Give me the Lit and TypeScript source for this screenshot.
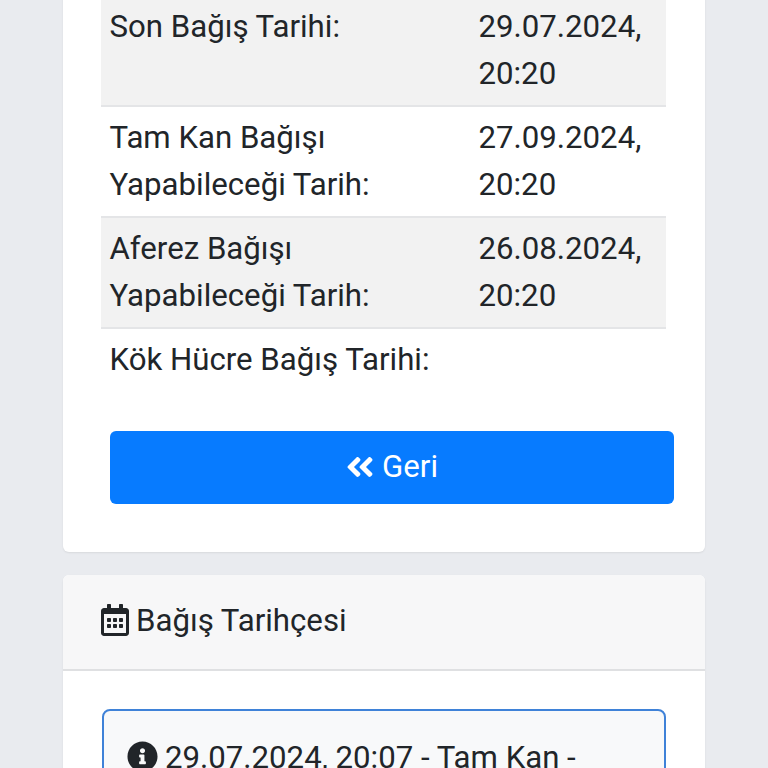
import { LitElement, css, html } from 'lit';
import { customElement } from 'lit/decorators.js';

const rows = [
  ['Son Bağış Tarihi:', '29.07.2024, 20:20'],
  ['Tam Kan Bağışı Yapabileceği Tarih:', '27.09.2024, 20:20'],
  ['Aferez Bağışı Yapabileceği Tarih:', '26.08.2024, 20:20'],
  ['Kök Hücre Bağış Tarihi:', ''],
];

@customElement('app-root')
export class AppRoot extends LitElement {
  static styles = css`
    :host {
      display: block;
      height: 768px;
      overflow: hidden;
      background: #e9ebef;
      color: #212529;
      font-family: Roboto, "Liberation Sans", sans-serif;
      font-size: 31.2px;
      line-height: 46.5px;
    }

    .page {
      margin-top: -42px;
      padding: 0 63px;
      display: flex;
      flex-direction: column;
      gap: 23px;
    }

    .card {
      background: white;
      border-radius: 6px;
      box-shadow: 0 1px 2px rgba(0, 0, 0, 0.08);
    }

    .details {
      padding: 38px 31px 48px 38px;
    }

    table {
      width: 565px;
      border-collapse: collapse;
      table-layout: fixed;
    }

    td {
      padding: 8px 8.5px;
      vertical-align: top;
      border-bottom: 2px solid #e4e5e7;
    }

    tr:nth-child(odd) td {
      background: #f2f2f2;
    }

    tr:last-child td {
      background: white;
      border-bottom: none;
    }

    td:first-child {
      width: 340px;
      padding-right: 20.5px;
    }

    .back {
      margin: 39px 0 0 9px;
      height: 73px;
      display: flex;
      align-items: center;
      justify-content: center;
      gap: 8px;
      background: #077bff;
      color: white;
      border-radius: 6px;
    }

    .back svg {
      width: 28px;
      height: 32px;
      fill: white;
    }

    .head {
      height: 94px;
      padding-left: 38px;
      display: flex;
      align-items: center;
      gap: 7px;
      background: #f7f7f8;
      border-bottom: 2px solid #dfe0e2;
      border-radius: 6px 6px 0 0;
    }

    .head svg {
      width: 28px;
      height: 32px;
      margin-bottom: 4px;
      fill: #212529;
    }

    .body {
      padding: 38px 39px 0 39px;
    }

    .alert {
      height: 120px;
      padding: 24px 0 0 23px;
      display: flex;
      align-items: flex-start;
      gap: 7px;
      background: #f8f9fa;
      border: 2px solid #3f82d8;
      border-radius: 8px;
    }

    .alert svg {
      width: 31px;
      height: 31px;
      margin-top: 6px;
      fill: #212529;
    }
  `;

  render() {
    return html`
      <div class="page">
        <section class="card details">
          <table>
            ${rows.map(([label, value]) => html`<tr><td>${label}</td><td>${value}</td></tr>`)}
          </table>
          <div class="back">
            <svg viewBox="0 0 448 512"><path d="M223.7 239l136-136c9.4-9.4 24.6-9.4 33.9 0l22.6 22.6c9.4 9.4 9.4 24.6 0 33.9L319.9 256l96.4 96.4c9.4 9.4 9.4 24.6 0 33.9L393.7 409c-9.4 9.4-24.6 9.4-33.9 0l-136-136c-9.5-9.4-9.5-24.6-.1-34zm-192 34l136 136c9.4 9.4 24.6 9.4 33.9 0l22.6-22.6c9.4-9.4 9.4-24.6 0-33.9L127.9 256l96.4-96.4c9.4-9.4 9.4-24.6 0-33.9L201.7 103c-9.4-9.4-24.6-9.4-33.9 0l-136 136c-9.5 9.4-9.5 24.6-.1 34z"/></svg>
            <span>Geri</span>
          </div>
        </section>
        <section class="card">
          <div class="head">
            <svg viewBox="0 0 448 512"><path d="M148 288h-40c-6.6 0-12-5.4-12-12v-40c0-6.6 5.4-12 12-12h40c6.6 0 12 5.4 12 12v40c0 6.6-5.4 12-12 12zm108-12v-40c0-6.6-5.4-12-12-12h-40c-6.6 0-12 5.4-12 12v40c0 6.6 5.4 12 12 12h40c6.6 0 12-5.4 12-12zm96 0v-40c0-6.6-5.4-12-12-12h-40c-6.6 0-12 5.4-12 12v40c0 6.6 5.4 12 12 12h40c6.6 0 12-5.4 12-12zm-96 96v-40c0-6.6-5.4-12-12-12h-40c-6.6 0-12 5.4-12 12v40c0 6.6 5.4 12 12 12h40c6.6 0 12-5.4 12-12zm-96 0v-40c0-6.6-5.4-12-12-12h-40c-6.6 0-12 5.4-12 12v40c0 6.6 5.4 12 12 12h40c6.6 0 12-5.4 12-12zm192 0v-40c0-6.6-5.4-12-12-12h-40c-6.6 0-12 5.4-12 12v40c0 6.6 5.4 12 12 12h40c6.6 0 12-5.4 12-12zm96-260v352c0 26.5-21.5 48-48 48H48c-26.5 0-48-21.5-48-48V112c0-26.5 21.5-48 48-48h48V12c0-6.6 5.4-12 12-12h40c6.6 0 12 5.4 12 12v52h128V12c0-6.6 5.4-12 12-12h40c6.6 0 12 5.4 12 12v52h48c26.5 0 48 21.5 48 48zm-48 346V160H48v298c0 3.3 2.7 6 6 6h340c3.3 0 6-2.7 6-6z"/></svg>
            <span>Bağış Tarihçesi</span>
          </div>
          <div class="body">
            <div class="alert">
              <svg viewBox="0 0 512 512"><path d="M256 8C119.043 8 8 119.083 8 256c0 136.997 111.043 248 248 248s248-111.003 248-248C504 119.083 392.957 8 256 8zm0 110c23.196 0 42 18.804 42 42s-18.804 42-42 42-42-18.804-42-42 18.804-42 42-42zm56 254c0 6.627-5.373 12-12 12h-88c-6.627 0-12-5.373-12-12v-24c0-6.627 5.373-12 12-12h12v-64h-12c-6.627 0-12-5.373-12-12v-24c0-6.627 5.373-12 12-12h64c6.627 0 12 5.373 12 12v100h12c6.627 0 12 5.373 12 12v24z"/></svg>
              <span>29.07.2024, 20:07 - Tam Kan -</span>
            </div>
          </div>
        </section>
      </div>
    `;
  }
}
